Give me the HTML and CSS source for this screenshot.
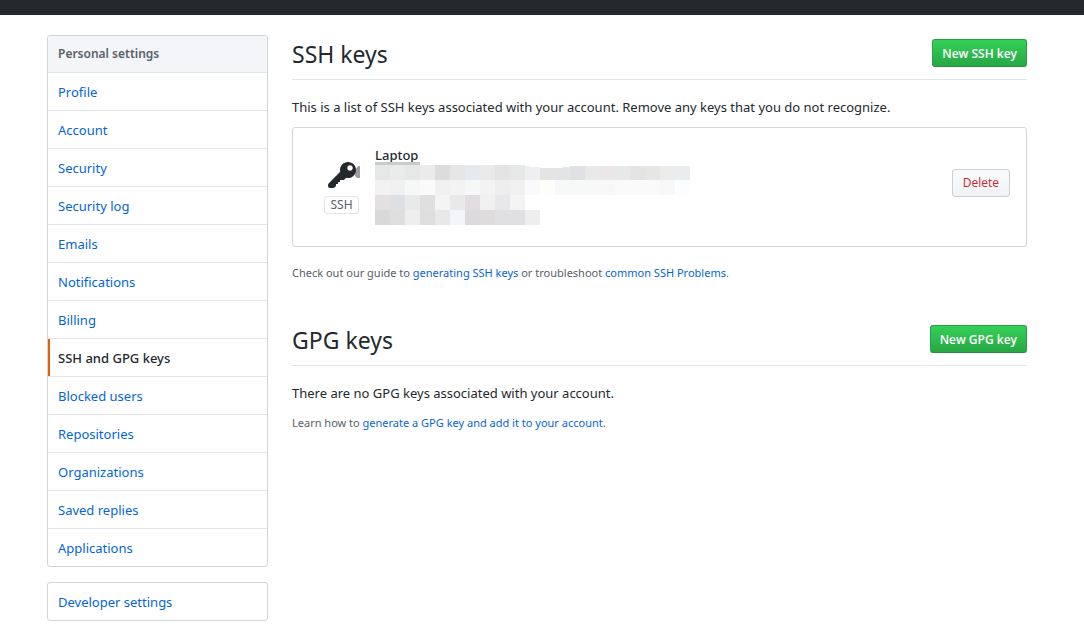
FILE: index.html
```
<!DOCTYPE html>
<html lang="en">
<head>
<meta charset="utf-8">
<title>SSH and GPG keys</title>
<link rel="stylesheet" href="styles.css">
</head>
<body>
<header class="topbar"></header>
<div class="page">
  <aside class="sidebar">
    <nav class="menu" aria-label="Personal settings">
      <h3 class="menu-heading">Personal settings</h3>
      <a class="menu-item" href="#">Profile</a>
      <a class="menu-item" href="#">Account</a>
      <a class="menu-item" href="#">Security</a>
      <a class="menu-item" href="#">Security log</a>
      <a class="menu-item" href="#">Emails</a>
      <a class="menu-item" href="#">Notifications</a>
      <a class="menu-item" href="#">Billing</a>
      <a class="menu-item selected" href="#" aria-current="page">SSH and GPG keys</a>
      <a class="menu-item" href="#">Blocked users</a>
      <a class="menu-item" href="#">Repositories</a>
      <a class="menu-item" href="#">Organizations</a>
      <a class="menu-item" href="#">Saved replies</a>
      <a class="menu-item" href="#">Applications</a>
    </nav>
    <nav class="menu" aria-label="Developer">
      <a class="menu-item" href="#">Developer settings</a>
    </nav>
  </aside>
  <main class="content">
    <section class="section">
      <div class="subhead">
        <h2 class="subhead-title">SSH keys</h2>
        <button class="btn btn-primary" type="button">New SSH key</button>
      </div>
      <p class="text">This is a list of SSH keys associated with your account. Remove any keys that you do not recognize.</p>
      <div class="key-box">
        <div class="key-type">
          <svg class="key-icon" width="32" height="32" viewBox="0 0 16 16" aria-hidden="true">
            <path fill="#9d9d9d" d="M16 3v6h-1.500L13.500 8V5L15 3z"/>
            <path fill="#24292e" fill-rule="evenodd" d="M12.830 2.170C12.080 1.420 11.140 1.030 10 1c-1.130.030-2.080.42-2.830 1.170S6.040 3.860 6.010 5c0 .3.030.59.090.89L.3 11.700Q0 12 0 12.500V13q0 1 1 1h1.500q.5 0 1-.5L4 13v-1h1v-1h1v-1h2l1.090-1.110c.3.080.59.110.91.110 1.140-.030 2.080-.42 2.830-1.170S13.970 6.140 14 5c-.030-1.140-.42-2.080-1.170-2.830zM11 5.380c-.77 0-1.380-.61-1.380-1.380 0-.77.61-1.380 1.380-1.380.77 0 1.380.61 1.380 1.380 0 .77-.61 1.380-1.380 1.380z"/>
          </svg>
          <span class="tag">SSH</span>
        </div>
        <div class="key-info">
          <strong class="key-name">Laptop</strong>
          <svg class="mosaic" width="315" height="63" viewBox="0 0 315 63" shape-rendering="crispEdges" aria-hidden="true">
            <path fill="#c9cacc" d="M0 0h45v3H0z"/>
            <path fill="#e6e8e7" d="M0 3h15v15H0zM30 3h15v15H30zM135 3h15v15H135z"/>
            <path fill="#ebebeb" d="M15 3h15v15H15zM45 3h15v15H45z"/>
            <path fill="#dcdcdc" d="M60 3h15v15H60z"/>
            <path fill="#e6e6e6" d="M75 3h15v15H75z"/>
            <path fill="#e4eaed" d="M90 3h15v15H90z"/>
            <path fill="#eaeaea" d="M105 3h15v15H105z"/>
            <path fill="#e4e4e4" d="M120 3h15v15H120zM165 6h15v12H165zM255 4h15v14H255z"/>
            <path fill="#efeff1" d="M150 4h4v1h11v13H150z"/>
            <path fill="#e2e4e6" d="M180 6h8V5h7v13H180z"/>
            <path fill="#dfe1e4" d="M195 4h15v14H195z"/>
            <path fill="#e9e9e9" d="M210 4h15v14H210z"/>
            <path fill="#ebe7e8" d="M225 4h15v14H225z"/>
            <path fill="#e6e8ea" d="M240 4h15v14H240z"/>
            <path fill="#e8e6e3" d="M270 4h15v14H270z"/>
            <path fill="#eaedea" d="M285 4h15v14H285z"/>
            <path fill="#ebecef" d="M300 4h14v1h1v13H300z"/>
            <path fill="#f2f2f0" d="M0 18h15v15H0z"/>
            <path fill="#f0f0f0" d="M15 18h15v15H15zM60 18h15v15H60zM135 18h15v15H135z"/>
            <path fill="#f6f8f7" d="M30 18h15v15H30zM90 18h15v15H90z"/>
            <path fill="#fafafa" d="M45 18h15v15H45zM150 18h15v15H150zM240 18h45v15H240z"/>
            <path fill="#f3f3f3" d="M75 18h15v15H75zM105 18h15v15H105z"/>
            <path fill="#eeeeee" d="M120 18h15v15H120z"/>
            <path fill="#fdfdfa" d="M165 18h15v15H165z"/>
            <path fill="#f7f9f8" d="M180 18h30v15H180z"/>
            <path fill="#f8f8f8" d="M210 18h30v15H210zM285 18h15v15H285z"/>
            <path fill="#fbfefe" d="M300 18h15v15H300z"/>
            <path fill="#e3e0e2" d="M0 33h15v15H0z"/>
            <path fill="#dddfe2" d="M15 33h15v15H15z"/>
            <path fill="#e9e9e9" d="M30 33h15v15H30zM75 33h15v15H75z"/>
            <path fill="#dfdfdf" d="M45 33h15v15H45z"/>
            <path fill="#f4f4f5" d="M60 33h15v15H60zM135 33h15v15H135z"/>
            <path fill="#e0dce0" d="M90 33h15v15H90z"/>
            <path fill="#f0f0f0" d="M105 33h15v15H105z"/>
            <path fill="#e8e8eb" d="M120 33h15v15H120z"/>
            <path fill="#d9d9d9" d="M0 48h15v15H0z"/>
            <path fill="#dedede" d="M15 48h15v15H15zM45 48h15v15H45z"/>
            <path fill="#eeeeee" d="M30 48h15v15H30zM150 48h15v15H150z"/>
            <path fill="#e8e8e8" d="M60 48h15v15H60z"/>
            <path fill="#f4f5f8" d="M75 48h15v15H75z"/>
            <path fill="#dcdadd" d="M90 48h15v15H90z"/>
            <path fill="#dfdcde" d="M105 48h15v15H105z"/>
            <path fill="#e0e0e2" d="M120 48h30v15H120z"/>
          </svg>
        </div>
        <button class="btn btn-danger" type="button">Delete</button>
      </div>
      <p class="note">Check out our guide to <a href="#">generating SSH keys</a> or troubleshoot <a href="#">common SSH Problems</a>.</p>
    </section>
    <section class="section">
      <div class="subhead">
        <h2 class="subhead-title">GPG keys</h2>
        <button class="btn btn-primary" type="button">New GPG key</button>
      </div>
      <p class="text">There are no GPG keys associated with your account.</p>
      <p class="note">Learn how to <a href="#">generate a GPG key and add it to your account</a>.</p>
    </section>
  </main>
</div>
</body>
</html>
```
FILE: styles.css
```
* {
  box-sizing: border-box;
}

body {
  margin: 0;
  background: #fff;
  color: #24292e;
  font-family: "Noto Sans", "Open Sans", sans-serif;
  font-size: 13px;
  line-height: 20px;
}

a {
  color: #0366d6;
  text-decoration: none;
}

h2, h3, p {
  margin: 0;
}

.topbar {
  height: 15px;
  background: #24292e;
}

.page {
  display: flex;
  gap: 24px;
  max-width: 1084px;
  margin: 0 auto;
  padding: 20px 57px 16px 47px;
}

.sidebar {
  flex: 0 0 221px;
  display: flex;
  flex-direction: column;
  gap: 15px;
}

.menu {
  border: 1px solid #d1d5da;
  border-radius: 3px;
  overflow: hidden;
}

.menu-heading {
  padding: 8px 10px;
  background: #f3f5f8;
  border-bottom: 1px solid #e1e4e8;
  color: #586069;
  font-size: 12px;
  font-weight: 600;
  line-height: 20px;
}

.menu-item {
  display: block;
  padding: 9px 10px 8px;
  border-bottom: 1px solid #e1e4e8;
}

.menu-item:last-child {
  border-bottom: 0;
}

.menu-item.selected {
  color: #24292e;
  font-weight: 500;
  box-shadow: inset 2px 0 0 #e36209;
}

.content {
  flex: 1;
  min-width: 0;
  display: flex;
  flex-direction: column;
  gap: 38px;
}

.subhead {
  display: flex;
  align-items: center;
  justify-content: space-between;
  margin-bottom: 17px;
  padding: 4px 0 12px;
  border-bottom: 1px solid #e1e4e8;
}

.subhead-title {
  padding-top: 2px;
  font-size: 23px;
  font-weight: 400;
  line-height: 26px;
}

.btn {
  height: 28px;
  padding: 0 10px;
  border: 1px solid #cdcfd1;
  border-radius: 3px;
  font: 600 12px/20px "Open Sans", "Noto Sans", sans-serif;
}

.btn-primary {
  padding: 2px 9px 0;
  border-color: #28a045 #28a045 #23913d;
  background: linear-gradient(#34d058, #28a745);
  color: #fff;
}

.btn-danger {
  margin-bottom: 8px;
  background: linear-gradient(#fafbfc, #eff3f6);
  color: #cb2431;
  font-weight: 400;
}

.key-box {
  display: flex;
  align-items: center;
  margin: 10px 0 16px;
  padding: 20px 16px 21px 32px;
  border: 1px solid #d1d5da;
  border-radius: 3px;
}

.key-type {
  display: flex;
  flex-direction: column;
  align-items: center;
  gap: 4px;
  width: 33px;
  margin-right: 17px;
  padding-top: 1px;
}

.key-icon {
  display: block;
  margin-left: 4px;
}

.tag {
  padding: 0 5px;
  border: 1px solid #e1e4e8;
  border-radius: 3px;
  color: #586069;
  font-size: 12px;
  line-height: 16px;
}

.key-info {
  flex: 1;
}

.key-name {
  display: block;
  font-weight: 500;
  line-height: 14px;
}

.mosaic {
  display: block;
}

.note {
  color: #586069;
  font-size: 11px;
}

.text + .note {
  margin-top: 10px;
}
```
